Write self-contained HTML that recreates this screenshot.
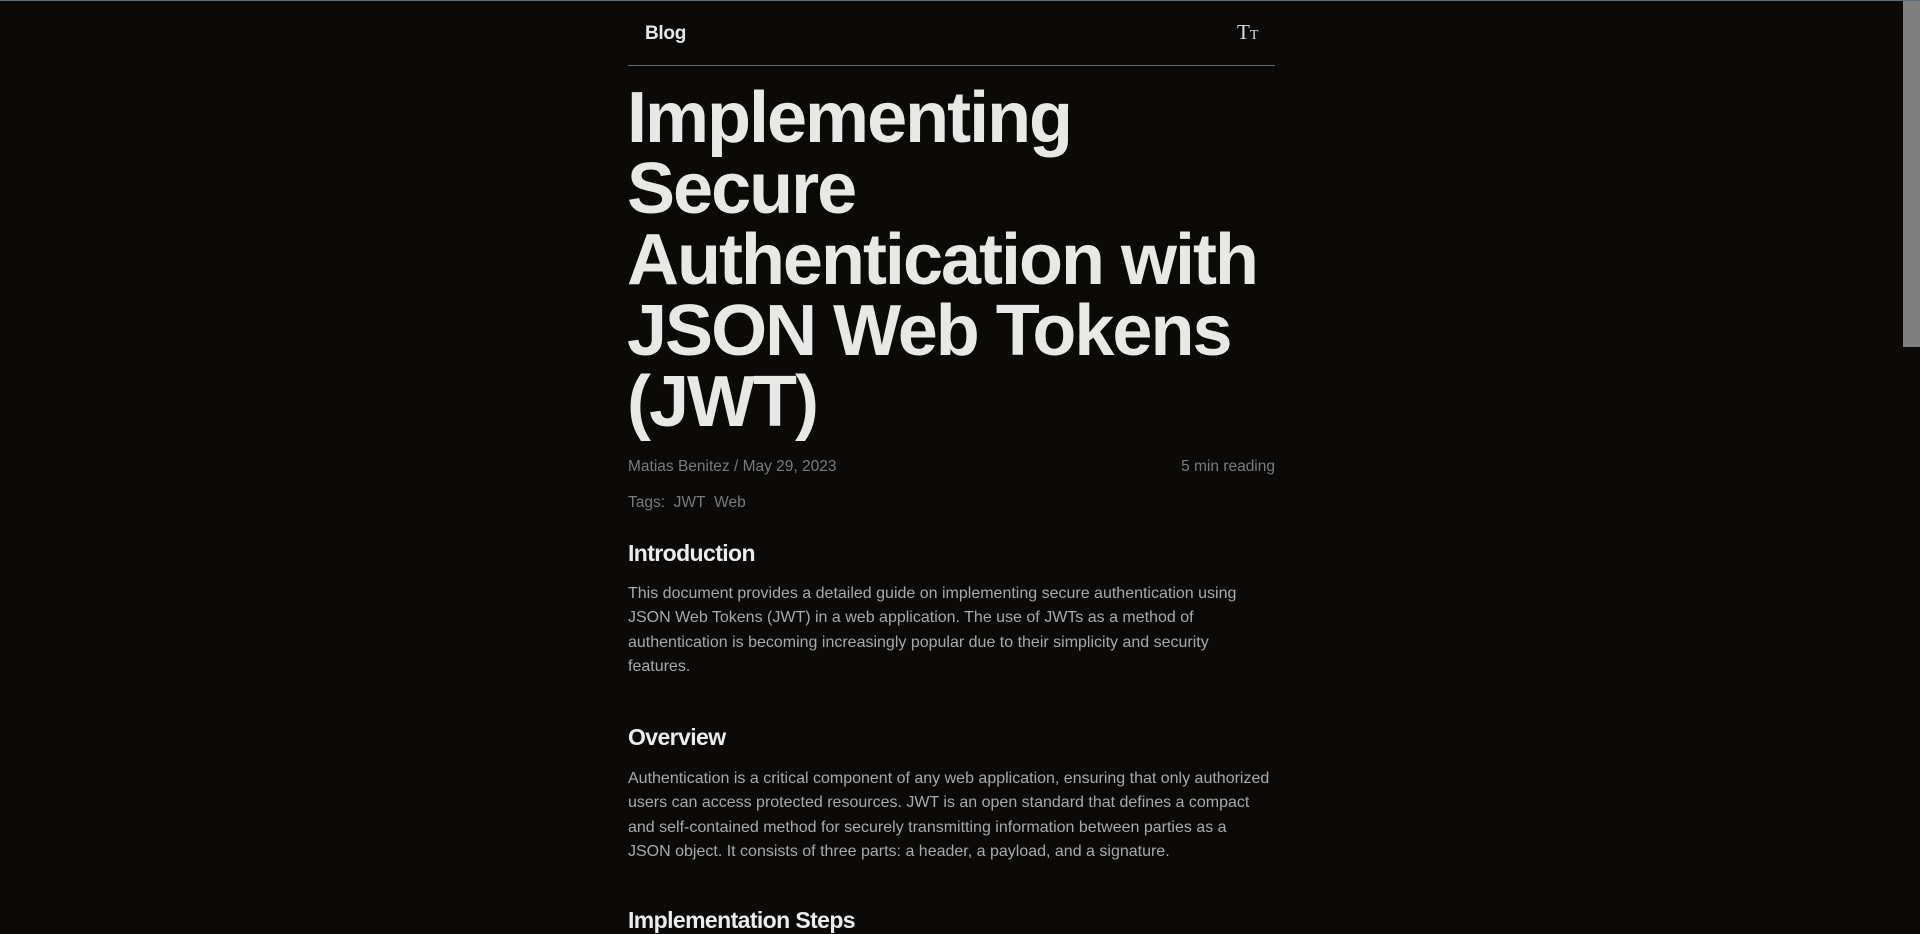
<!DOCTYPE html>
<html><head><meta charset="utf-8"><style>
html,body{margin:0;padding:0;}
body{width:1920px;height:924px;overflow:hidden;background:#0b0a09;font-family:"Liberation Sans",sans-serif;position:relative;}
.top{position:absolute;left:0;top:0;width:1920px;height:1px;background:#5f6e7b;}
.thumb{position:absolute;left:1903px;top:1px;width:17px;height:346px;background:#7f7f7f;}
.a{position:absolute;white-space:nowrap;}
.blog{left:645px;top:23px;font-size:19px;font-weight:bold;color:#e8e8e8;letter-spacing:-0.3px;}
.tt{left:1237px;top:20px;font-family:"Liberation Serif",serif;color:#ddd;font-size:21px;}
.tt small{font-size:14px;}
.hr{position:absolute;left:628px;top:65px;width:647px;height:1px;background:#6a6a6a;}
h1{position:absolute;left:627px;top:83px;margin:0;width:660px;font-size:72px;line-height:71px;letter-spacing:-2px;font-weight:bold;color:#e8e8e6;}
.meta{font-size:15.5px;color:#7a7a7a;}
h2{position:absolute;left:628px;margin:0;font-size:23px;font-weight:bold;color:#ececec;letter-spacing:-0.6px;}
p{position:absolute;left:628px;margin:0;width:680px;font-size:16px;line-height:24.3px;color:#a9a9a9;}
</style></head><body>
<div class="top"></div>
<div class="thumb"></div>
<div class="a blog">Blog</div>
<div class="a tt">T<small>T</small></div>
<div class="hr"></div>
<h1>Implementing<br>Secure<br>Authentication with<br>JSON Web Tokens<br>(JWT)</h1>
<div class="a meta" style="left:628px;top:458px;">Matias Benitez / May 29, 2023</div>
<div class="a meta" style="right:645px;top:458px;">5 min reading</div>
<div class="a meta" style="left:628px;top:494px;">Tags:&nbsp; JWT&nbsp; Web</div>
<h2 style="top:540px;">Introduction</h2>
<p style="top:582px;">This document provides a detailed guide on implementing secure authentication using<br>JSON Web Tokens (JWT) in a web application. The use of JWTs as a method of<br>authentication is becoming increasingly popular due to their simplicity and security<br>features.</p>
<h2 style="top:724px;">Overview</h2>
<p style="top:767px;">Authentication is a critical component of any web application, ensuring that only authorized<br>users can access protected resources. JWT is an open standard that defines a compact<br>and self-contained method for securely transmitting information between parties as a<br>JSON object. It consists of three parts: a header, a payload, and a signature.</p>
<h2 style="top:907px;">Implementation Steps</h2>
</body></html>
